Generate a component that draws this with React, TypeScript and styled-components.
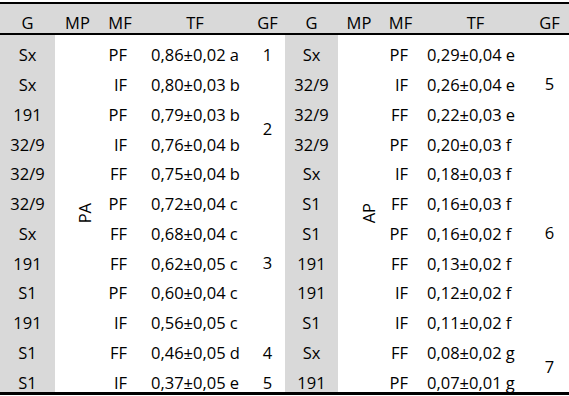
import React from 'react';
import styled, { createGlobalStyle } from 'styled-components';

const Global = createGlobalStyle`
  html, body { margin: 0; padding: 0; background: #fff; }
  body { font-family: "Open Sans", "Liberation Sans", sans-serif; }
`;

type Align = 'left' | 'center' | 'right';

const Sheet = styled.div`
  margin-top: 2px;
  width: 569px;
  display: grid;
  grid-template-columns: 55px 45px 40px 110px 35px 53px 42px 41px 109px 39px;
  grid-template-rows: 31px repeat(12, 29.75px);
  border-top: 2px solid #000;
  border-bottom: 3px solid #000;
  font-size: 16.5px;
  line-height: 1;
  color: #000;
`;

const Cell = styled.div<{
  $col: number;
  $row: number;
  $span?: number;
  $align?: Align;
  $gray?: boolean;
  $pl?: number;
  $pr?: number;
}>`
  grid-column: ${(p) => p.$col};
  grid-row: ${(p) => p.$row} / span ${(p) => p.$span ?? 1};
  display: flex;
  align-items: flex-end;
  justify-content: ${(p) =>
    p.$align === 'left' ? 'flex-start' : p.$align === 'right' ? 'flex-end' : 'center'};
  padding: 0 ${(p) => p.$pr ?? 0}px 1px ${(p) => p.$pl ?? 0}px;
  background: ${(p) => (p.$gray ? '#d9d9d9' : 'transparent')};
  white-space: nowrap;
`;

const HeadCell = styled(Cell)`
  background: #d9d9d9;
  border-bottom: 2px solid #000;
  padding-bottom: 2px;
`;

const GroupCell = styled(Cell)`
  align-items: center;
  padding-top: 10px;
  padding-bottom: 0;
`;

const RotatedCell = styled(Cell)`
  align-items: center;
  padding-bottom: 0;
`;

const Vertical = styled.span`
  writing-mode: vertical-rl;
  transform: rotate(180deg);
`;

type Row = [string, string, string];

const left: Row[] = [
  ['Sx', 'PF', '0,86±0,02 a'],
  ['Sx', 'IF', '0,80±0,03 b'],
  ['191', 'PF', '0,79±0,03 b'],
  ['32/9', 'IF', '0,76±0,04 b'],
  ['32/9', 'FF', '0,75±0,04 b'],
  ['32/9', 'PF', '0,72±0,04 c'],
  ['Sx', 'FF', '0,68±0,04 c'],
  ['191', 'FF', '0,62±0,05 c'],
  ['S1', 'PF', '0,60±0,04 c'],
  ['191', 'IF', '0,56±0,05 c'],
  ['S1', 'FF', '0,46±0,05 d'],
  ['S1', 'IF', '0,37±0,05 e'],
];

const right: Row[] = [
  ['Sx', 'PF', '0,29±0,04 e'],
  ['32/9', 'IF', '0,26±0,04 e'],
  ['32/9', 'FF', '0,22±0,03 e'],
  ['32/9', 'PF', '0,20±0,03 f'],
  ['Sx', 'IF', '0,18±0,03 f'],
  ['S1', 'FF', '0,16±0,03 f'],
  ['S1', 'PF', '0,16±0,02 f'],
  ['191', 'FF', '0,13±0,02 f'],
  ['191', 'IF', '0,12±0,02 f'],
  ['S1', 'IF', '0,11±0,02 f'],
  ['Sx', 'FF', '0,08±0,02 g'],
  ['191', 'PF', '0,07±0,01 g'],
];

type Group = { label: string; start: number; span: number };

const leftGroups: Group[] = [
  { label: '1', start: 1, span: 1 },
  { label: '2', start: 2, span: 4 },
  { label: '3', start: 6, span: 5 },
  { label: '4', start: 11, span: 1 },
  { label: '5', start: 12, span: 1 },
];

const rightGroups: Group[] = [
  { label: '5', start: 1, span: 3 },
  { label: '6', start: 4, span: 7 },
  { label: '7', start: 11, span: 2 },
];

type HalfProps = {
  base: number;
  rows: Row[];
  groups: Group[];
  mp: string;
  mpPad: number;
  tfPad: number;
};

const headers = ['G', 'MP', 'MF', 'TF', 'GF'];

function Half({ base, rows, groups, mp, mpPad, tfPad }: HalfProps) {
  return (
    <>
      {headers.map((h, i) => (
        <HeadCell key={`h${i}`} $col={base + i} $row={1}>
          {h}
        </HeadCell>
      ))}
      {rows.map(([g, mf, tf], i) => (
        <React.Fragment key={i}>
          <Cell $col={base} $row={i + 2} $gray>
            {g}
          </Cell>
          <Cell $col={base + 2} $row={i + 2} $align="right" $pr={13}>
            {mf}
          </Cell>
          <Cell $col={base + 3} $row={i + 2} $align="left" $pl={tfPad}>
            {tf}
          </Cell>
        </React.Fragment>
      ))}
      <RotatedCell $col={base + 1} $row={2} $span={12} $align="right" $pr={mpPad}>
        <Vertical>{mp}</Vertical>
      </RotatedCell>
      {groups.map((gr) =>
        gr.span > 1 ? (
          <GroupCell key={gr.start} $col={base + 4} $row={gr.start + 1} $span={gr.span}>
            {gr.label}
          </GroupCell>
        ) : (
          <Cell key={gr.start} $col={base + 4} $row={gr.start + 1}>
            {gr.label}
          </Cell>
        )
      )}
    </>
  );
}

export default function App() {
  return (
    <>
      <Global />
      <Sheet>
        <Half base={1} rows={left} groups={leftGroups} mp="PA" mpPad={7} tfPad={11} />
        <Half base={6} rows={right} groups={rightGroups} mp="AP" mpPad={3} tfPad={6} />
      </Sheet>
    </>
  );
}
